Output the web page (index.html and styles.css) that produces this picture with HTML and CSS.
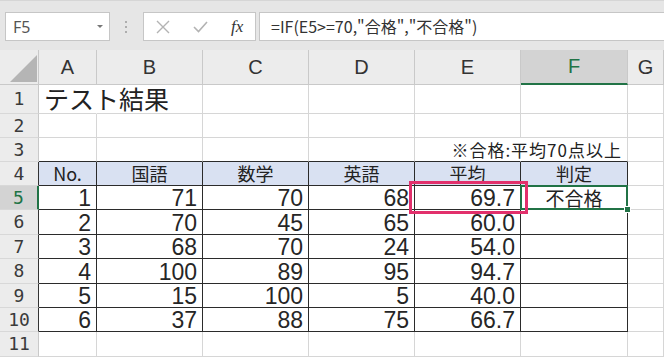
FILE: index.html
```html
<!DOCTYPE html>
<html lang="ja">
<head>
  <meta charset="utf-8" />
  <title>テスト結果 - Excel</title>
  <link rel="stylesheet" href="styles.css">
</head>
<body>
  <div class="formula-bar">
    <div class="name-box">
      <span>F5</span>
      <span class="drop"></span>
    </div>
    <svg class="grip" width="4" height="14" viewBox="0 0 4 14">
      <circle cx="2" cy="2" r="1" fill="#9a9a9a"/>
      <circle cx="2" cy="7" r="1" fill="#9a9a9a"/>
      <circle cx="2" cy="12" r="1" fill="#9a9a9a"/>
    </svg>
    <div class="fx-box">
      <svg width="14" height="14" viewBox="0 0 14 14">
        <path d="M1 1 L13 13 M13 1 L1 13" stroke="#b3b3b3" stroke-width="1.4" fill="none"/>
      </svg>
      <svg width="15" height="12" viewBox="0 0 15 12">
        <path d="M1 6 L5.5 10.5 L14 1" stroke="#b3b3b3" stroke-width="1.6" fill="none"/>
      </svg>
      <span class="fx">fx</span>
    </div>
    <div class="formula">=IF(E5&gt;=70,"合格","不合格")</div>
  </div>

  <div class="sheet">
    <!-- column headers -->
    <div class="corner"><span class="tri"></span></div>
    <div class="hd">A</div>
    <div class="hd">B</div>
    <div class="hd">C</div>
    <div class="hd">D</div>
    <div class="hd">E</div>
    <div class="hd sel">F</div>
    <div class="hd">G</div>

    <!-- 1 -->
    <div class="rh">1</div>
    <div class="c nb title">テスト結果</div>
    <div class="c"></div>
    <div class="c"></div>
    <div class="c"></div>
    <div class="c"></div>
    <div class="c"></div>
    <div class="c"></div>

    <!-- 2 -->
    <div class="rh">2</div>
    <div class="c"></div>
    <div class="c"></div>
    <div class="c"></div>
    <div class="c"></div>
    <div class="c"></div>
    <div class="c"></div>
    <div class="c"></div>

    <!-- 3 -->
    <div class="rh">3</div>
    <div class="c top"></div>
    <div class="c top"></div>
    <div class="c top"></div>
    <div class="c top"></div>
    <div class="c top nb"></div>
    <div class="c top note">※合格:平均70点以上</div>
    <div class="c"></div>

    <!-- 4 -->
    <div class="rh in">4</div>
    <div class="c t th">No.</div>
    <div class="c t th">国語</div>
    <div class="c t th">数学</div>
    <div class="c t th">英語</div>
    <div class="c t th">平均</div>
    <div class="c t th">判定</div>
    <div class="c"></div>

    <!-- 5 -->
    <div class="rh in cur">5</div>
    <div class="c t num">1</div>
    <div class="c t num">71</div>
    <div class="c t num">70</div>
    <div class="c t num">68</div>
    <div class="c t num mark">69.7<span class="ring"></span></div>
    <div class="c t mid active">不合格<span class="pick"></span></div>
    <div class="c"></div>

    <!-- 6 -->
    <div class="rh in">6</div>
    <div class="c t num">2</div>
    <div class="c t num">70</div>
    <div class="c t num">45</div>
    <div class="c t num">65</div>
    <div class="c t num">60.0</div>
    <div class="c t"></div>
    <div class="c"></div>

    <!-- 7 -->
    <div class="rh in">7</div>
    <div class="c t num">3</div>
    <div class="c t num">68</div>
    <div class="c t num">70</div>
    <div class="c t num">24</div>
    <div class="c t num">54.0</div>
    <div class="c t"></div>
    <div class="c"></div>

    <!-- 8 -->
    <div class="rh in">8</div>
    <div class="c t num">4</div>
    <div class="c t num">100</div>
    <div class="c t num">89</div>
    <div class="c t num">95</div>
    <div class="c t num">94.7</div>
    <div class="c t"></div>
    <div class="c"></div>

    <!-- 9 -->
    <div class="rh in">9</div>
    <div class="c t num">5</div>
    <div class="c t num">15</div>
    <div class="c t num">100</div>
    <div class="c t num">5</div>
    <div class="c t num">40.0</div>
    <div class="c t"></div>
    <div class="c"></div>

    <!-- 10 -->
    <div class="rh in">10</div>
    <div class="c t num">6</div>
    <div class="c t num">37</div>
    <div class="c t num">88</div>
    <div class="c t num">75</div>
    <div class="c t num">66.7</div>
    <div class="c t"></div>
    <div class="c"></div>

    <!-- 11 -->
    <div class="rh">11</div>
    <div class="c"></div>
    <div class="c"></div>
    <div class="c"></div>
    <div class="c"></div>
    <div class="c"></div>
    <div class="c"></div>
    <div class="c"></div>
  </div>
</body>
</html>
```

FILE: styles.css
```css
body {
  margin: 0;
  font-family: "Noto Sans CJK JP", sans-serif;
  color: #222;
  background-color: #fff;
  overflow: hidden;
}

/* formula bar */
.formula-bar {
  height: 50px;
  box-sizing: border-box;
  background-color: #e6e6e6;
  border-top: 1px solid #d6d6d6;
  padding-top: 11px;
  display: flex;
  align-items: flex-start;
}
.name-box {
  width: 105px;
  height: 29px;
  margin-left: 5px;
  box-sizing: border-box;
  background-color: #fff;
  border: 1px solid #c6c6c6;
  display: flex;
  align-items: center;
  justify-content: space-between;
  padding: 0 6px 0 7px;
  font-family: "Noto Sans", sans-serif;
  font-size: 16px;
  color: #555;
}
.drop {
  width: 0;
  height: 0;
  border-left: 3px solid transparent;
  border-right: 3px solid transparent;
  border-top: 3px solid #777;
}
.grip {
  margin: 8px 0 0 14px;
}
.fx-box {
  width: 113px;
  height: 29px;
  margin-left: 15px;
  box-sizing: border-box;
  background-color: #fff;
  border: 1px solid #c6c6c6;
  display: flex;
  align-items: center;
  gap: 23px;
  padding-left: 12px;
}
.fx {
  font-family: "Liberation Serif", serif;
  font-style: italic;
  font-size: 17px;
  color: #333;
}
.formula {
  flex: 1;
  height: 29px;
  margin-left: 3px;
  margin-right: -4px;
  box-sizing: border-box;
  background-color: #fff;
  border: 1px solid #c6c6c6;
  padding-left: 11px;
  font-size: 16px;
  line-height: 27px;
  color: #333;
  white-space: nowrap;
}

/* sheet grid */
.sheet {
  display: grid;
  grid-template-columns: 39px 58px 106px 106px 106px 106px 107px 36px;
  grid-template-rows: 35px 29px 24px 24px 24px 24px 25px 24px 25px 24px 24px 25px;
}
.sheet > div {
  box-sizing: border-box;
  position: relative;
  white-space: nowrap;
}
.corner {
  background-color: #ececec;
  border-right: 1px solid #c9c9c9;
  border-bottom: 1px solid #c9c9c9;
}
.tri {
  position: absolute;
  left: 10px;
  top: 5px;
  width: 0;
  height: 0;
  border-left: 27px solid transparent;
  border-bottom: 27px solid #b5b5b5;
}
.hd {
  background-color: #ececec;
  border-right: 1px solid #c9c9c9;
  border-bottom: 1px solid #c9c9c9;
  font-family: "Liberation Sans", sans-serif;
  font-size: 20px;
  color: #333;
  display: flex;
  align-items: center;
  justify-content: center;
}
.hd.sel {
  background-color: #d3d3d3;
  color: #217346;
  border-bottom: 2px solid #217346;
}
.rh {
  background-color: #ececec;
  border-right: 1px solid #c9c9c9;
  border-bottom: 1px solid #d8d8d8;
  font-family: "DejaVu Sans Mono", monospace;
  font-size: 18px;
  line-height: 22px;
  color: #3a3a3a;
  display: flex;
  align-items: center;
  justify-content: center;
}
.rh.in {
  border-right-color: #333;
}
.rh.cur {
  background-color: #d3d3d3;
  color: #217346;
  border-right: 2px solid #217346;
}

.c {
  border-right: 1px solid #d6d6d6;
  border-bottom: 1px solid #d6d6d6;
  display: flex;
  align-items: flex-end;
  font-size: 19px;
  line-height: 23px;
}
.c.nb {
  border-right-color: transparent;
}
.c.top {
  border-bottom-color: #2b2b2b;
}
.c.t {
  border-right-color: #2b2b2b;
  border-bottom-color: #2b2b2b;
}
.title {
  font-size: 25px;
  line-height: 29px;
  padding-left: 5px;
}
.note {
  justify-content: flex-end;
  font-size: 17px;
  letter-spacing: 1px;
  line-height: 22px;
  padding-right: 5px;
}
.th {
  background-color: #d9e1f2;
  justify-content: center;
  font-size: 18px;
  line-height: 23px;
}
.num {
  justify-content: flex-end;
  padding-right: 5px;
  font-family: "Liberation Sans", sans-serif;
  font-size: 23px;
  line-height: 22px;
  color: #262626;
}
.mid {
  justify-content: center;
}

/* highlight on E5 */
.ring {
  position: absolute;
  left: -6px;
  top: -5px;
  right: -8px;
  bottom: -5px;
  border: 3px solid #e2306c;
  z-index: 2;
}
/* active cell F5 */
.active::before {
  content: "";
  position: absolute;
  left: -1px;
  top: -1px;
  right: -1px;
  bottom: -1px;
  border: 2px solid #217346;
}
.pick {
  position: absolute;
  right: -4px;
  bottom: -4px;
  width: 5px;
  height: 5px;
  background-color: #217346;
  border: 1px solid #fff;
  z-index: 3;
}
```
